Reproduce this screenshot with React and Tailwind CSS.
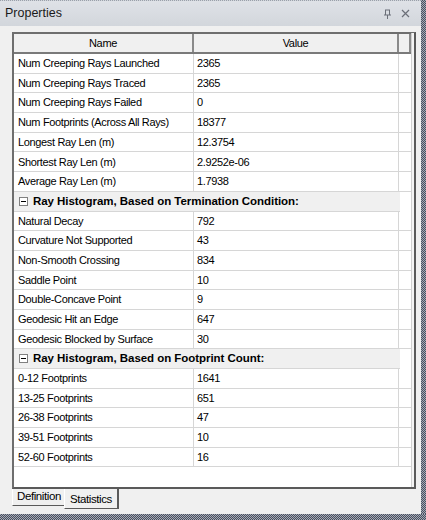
import React from "react";

const sections = [
  {
    rows: [
      ["Num Creeping Rays Launched", "2365"],
      ["Num Creeping Rays Traced", "2365"],
      ["Num Creeping Rays Failed", "0"],
      ["Num Footprints (Across All Rays)", "18377"],
      ["Longest Ray Len (m)", "12.3754"],
      ["Shortest Ray Len (m)", "2.9252e-06"],
      ["Average Ray Len (m)", "1.7938"],
    ],
  },
  {
    title: "Ray Histogram, Based on Termination Condition:",
    rows: [
      ["Natural Decay", "792"],
      ["Curvature Not Supported", "43"],
      ["Non-Smooth Crossing", "834"],
      ["Saddle Point", "10"],
      ["Double-Concave Point", "9"],
      ["Geodesic Hit an Edge", "647"],
      ["Geodesic Blocked by Surface", "30"],
    ],
  },
  {
    title: "Ray Histogram, Based on Footprint Count:",
    rows: [
      ["0-12 Footprints", "1641"],
      ["13-25 Footprints", "651"],
      ["26-38 Footprints", "47"],
      ["39-51 Footprints", "10"],
      ["52-60 Footprints", "16"],
    ],
  },
];

function Row({ name, value }) {
  return (
    <div className="flex h-[19.7px] border-b border-[#d6d6d6]">
      <div className="w-[180px] border-r border-[#d6d6d6] pl-[4px] flex items-center whitespace-nowrap overflow-hidden">
        {name}
      </div>
      <div className="w-[205px] border-r border-[#d6d6d6] pl-[3px] flex items-center">{value}</div>
    </div>
  );
}

function SectionRow({ title }) {
  return (
    <div className="flex h-[19.7px] border-b border-[#d6d6d6] bg-[#f0f0f0] w-[386px] items-center pl-[5px]">
      <div className="w-[9px] h-[9px] border border-[#808080] bg-white flex items-center justify-center mr-[5px]">
        <div className="w-[5px] h-px bg-black" />
      </div>
      <span className="font-bold text-[11.5px] tracking-[-0.05px] whitespace-nowrap">{title}</span>
    </div>
  );
}

export default function App() {
  const checker =
    "bg-[repeating-conic-gradient(#4a5060_0_25%,#a4a9b4_0_50%)] bg-[length:2px_2px]";
  return (
    <div
      className="w-[426px] h-[520px] flex flex-col bg-[#f0f0f0] text-black"
      style={{ fontFamily: '"Liberation Sans", Arial, sans-serif' }}
    >
      <div className="flex flex-1 min-h-0">
        <div className="flex-1 flex flex-col">
          {/* title bar */}
          <div className="h-[26px] bg-gradient-to-b from-[#dfe2e7] to-[#d2d6dc] flex items-center px-[5px] border-t border-dotted border-[#9aa0aa]">
            <span className="text-[12.5px] text-[#1a1a1a] flex-1">Properties</span>
            <svg width="9" height="10" viewBox="0 0 9 10" className="mr-[9px] mt-[1px]">
              <path d="M2 1h5M2.5 1v5M6.5 1v5M1 6h7M4.5 6v4" stroke="#6b6f78" strokeWidth="1" fill="none" />
            </svg>
            <svg width="9" height="9" viewBox="0 0 9 9" className="mr-[6px]">
              <path d="M1 1l7 7M8 1l-7 7" stroke="#6b6f78" strokeWidth="1.2" />
            </svg>
          </div>
          {/* body */}
          <div className="flex-1 flex flex-col pl-[12px] pr-[5px] pt-[6px]">
            <div className="h-[457px] border-l-2 border-t border-[#6e6e6e] border-r-2 border-r-[#5a5a5a] border-b-2 border-b-[#5a5a5a] bg-white relative text-[11px] tracking-[-0.35px]">
              <div className="absolute inset-y-0 right-0 w-[3px] border-l border-[#d0d0d0] bg-[#f4f4f4]" />
              {/* header */}
              <div className="flex h-[21px] border-t border-[#6e6e6e] border-b-2 border-b-[#7a7a7a] bg-[#f0f0f0]">
                <div className="w-[180px] border-r-2 border-[#8a8a8a] flex items-center justify-center">Name</div>
                <div className="w-[205px] border-r-2 border-[#8a8a8a] flex items-center justify-center">Value</div>
                <div className="w-[12px] border-r-2 border-[#8a8a8a]" />
              </div>
              {sections.map((s, i) => (
                <React.Fragment key={i}>
                  {s.title && <SectionRow title={s.title} />}
                  {s.rows.map(([n, v]) => (
                    <Row key={n} name={n} value={v} />
                  ))}
                </React.Fragment>
              ))}
            </div>
            {/* tabs */}
            <div className="flex text-[11.5px] tracking-[-0.4px]">
              <div className="h-[17px] pl-[4px] pr-[3px] flex items-center border-b border-[#5a5a5a] border-l border-l-[#ffffff]">
                Definition
              </div>
              <div className="h-[21px] pt-[3px] px-[5px] flex items-center border-l border-[#ffffff] border-r-2 border-r-[#5a5a5a] border-b border-b-[#5a5a5a] bg-[#f0f0f0] -mt-px">
                Statistics
              </div>
            </div>
          </div>
        </div>
        <div className={`w-[5px] ${checker}`} />
      </div>
      <div className={`h-[6px] ${checker}`} />
    </div>
  );
}
